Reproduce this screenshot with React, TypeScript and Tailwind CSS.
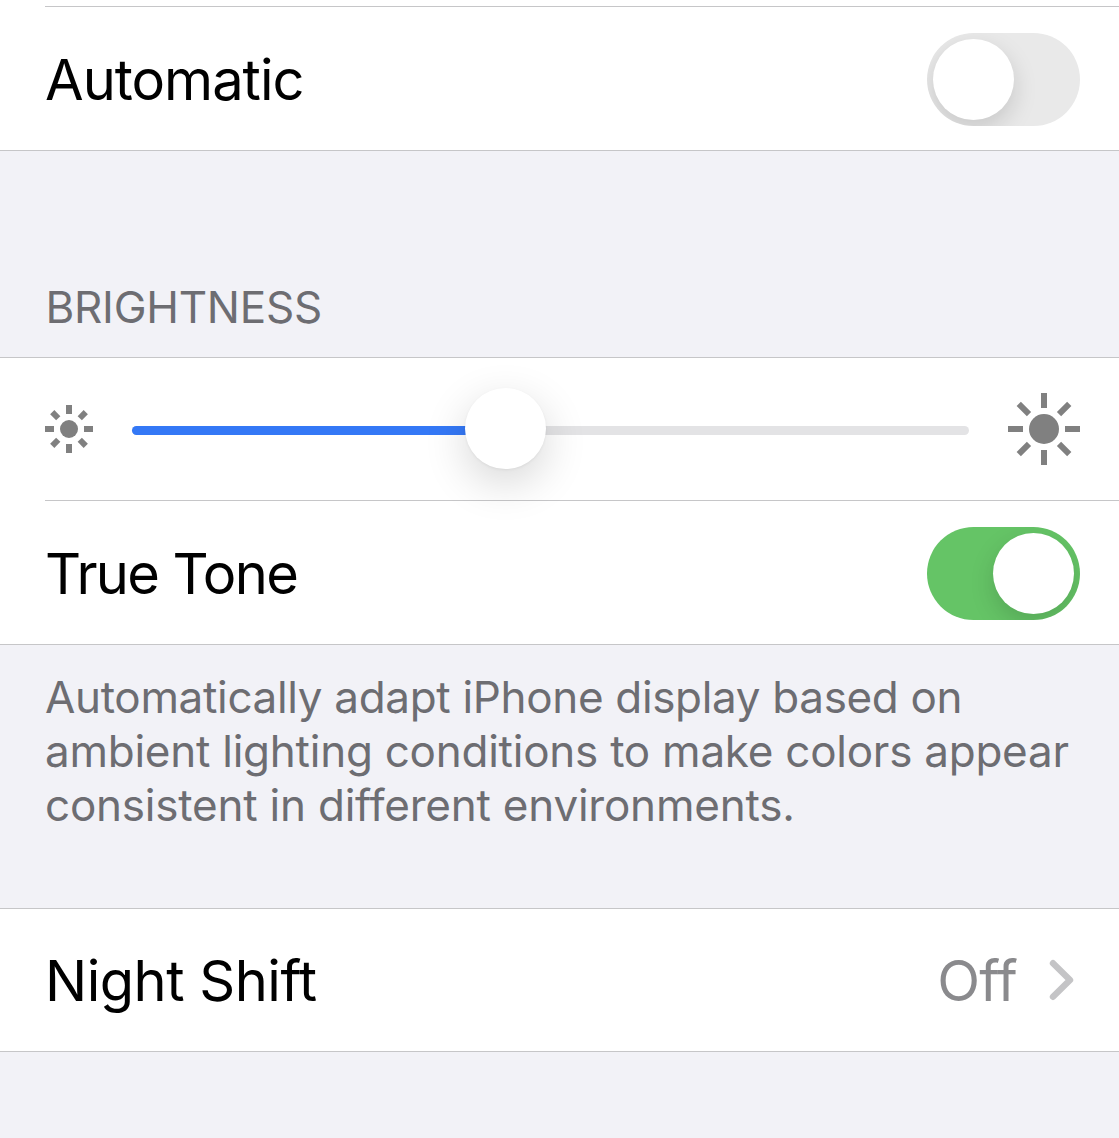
import React from "react";

const ANGLES = [0, 45, 90, 135, 180, 225, 270, 315];

function Sun({ large = false }: { large?: boolean }) {
  const size = large ? 72 : 48;
  const c = size / 2;
  const ray = large ? 15 : 9;
  return (
    <svg width={size} height={size} viewBox={`0 0 ${size} ${size}`} fill="#808080" className="shrink-0">
      <circle cx={c} cy={c} r={large ? 15 : 9} />
      {ANGLES.map((a) => {
        const diagonal = a % 90 !== 0;
        return (
          <rect
            key={a}
            x={c - 3}
            y={diagonal ? 0.3 : 0}
            width={6}
            height={diagonal ? ray - 0.5 : ray}
            transform={`rotate(${a} ${c} ${c})`}
          />
        );
      })}
    </svg>
  );
}

function Toggle({ on }: { on: boolean }) {
  return (
    <div
      role="switch"
      aria-checked={on}
      className={`mt-px flex h-[93px] w-[153px] items-center overflow-hidden rounded-full px-[6px] ${on ? "justify-end bg-[#65c466]" : "justify-start bg-[#e9e9e9]"}`}
    >
      <div className="size-[81px] rounded-full bg-white shadow-[0_9px_24px_rgba(0,0,0,0.15)]" />
    </div>
  );
}

export default function App() {
  return (
    <main className="h-[1138px] w-[1119px] overflow-hidden bg-[#f2f2f7] font-['Inter',sans-serif]">
      <section className="h-[151px] border-b border-[#c6c6c8] bg-white pt-[6px]">
        <div className="ml-[45px] flex h-[144px] items-center justify-between border-t border-[#c6c6c8] pr-[39px]">
          <span className="pt-[3px] text-[56px] leading-none tracking-[-1px] text-black">Automatic</span>
          <Toggle on={false} />
        </div>
      </section>

      <h2 className="flex h-[206px] items-end pb-[27px] pl-[45.5px] text-[44px] leading-[46px] tracking-[-0.25px] text-[#6d6d72]">
        BRIGHTNESS
      </h2>

      <section className="h-[288px] border-y border-[#c6c6c8] bg-white">
        <div className="flex h-[142px] items-center pl-[45px] pr-[39px]">
          <Sun />
          <div className="relative mx-[39px] mt-[2px] h-[9px] flex-1 rounded-full bg-[#e3e3e5]">
            <div className="h-full w-[373px] rounded-full bg-[#3478f6]" />
            <div className="absolute -top-[38px] left-[333px] size-[81px] rounded-full bg-white shadow-[0_14px_44px_rgba(0,0,0,0.16),0_1px_3px_rgba(0,0,0,0.06)]" />
          </div>
          <Sun large />
        </div>
        <div className="ml-[45px] flex h-[144px] items-center justify-between border-t border-[#c6c6c8] pr-[39px]">
          <span className="pt-[3px] text-[56px] leading-none tracking-[-1.6px] text-black">True Tone</span>
          <Toggle on />
        </div>
      </section>

      <p className="h-[263px] pl-[45px] pt-[25px] text-[44px] leading-[54px] text-[#6d6d72]">
        <span className="block whitespace-nowrap tracking-[-0.33px]">Automatically adapt iPhone display based on</span>
        <span className="block whitespace-nowrap tracking-[-0.25px]">ambient lighting conditions to make colors appear</span>
        <span className="block whitespace-nowrap tracking-[-0.22px]">consistent in different environments.</span>
      </p>

      <section className="flex h-[144px] items-center justify-between border-y border-[#c6c6c8] bg-white pl-[45px] pr-[44px]">
        <span className="pt-px text-[56px] leading-none tracking-[-0.5px] text-black">Night Shift</span>
        <div className="flex items-center gap-[32px]">
          <span className="pt-px text-[56px] leading-none tracking-[-0.8px] text-[#8a8a8d]">Off</span>
          <svg width="26" height="42" viewBox="0 0 26 42" fill="none" stroke="#c4c4c6" strokeWidth="6.4" strokeLinecap="round" strokeLinejoin="round">
            <path d="M4 4.2L21 21L4 37.8" />
          </svg>
        </div>
      </section>
    </main>
  );
}
